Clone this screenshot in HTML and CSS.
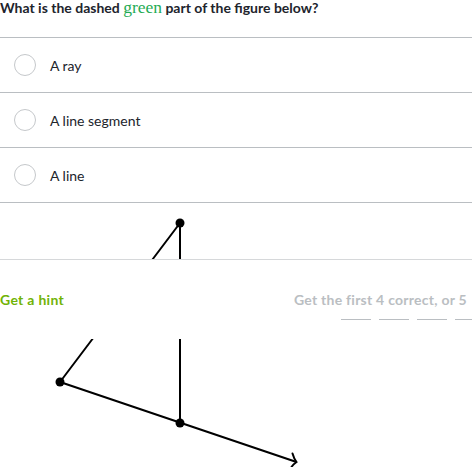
FILE: index.html
```html
<!DOCTYPE html>
<html>
<head>
<meta charset="utf-8">
<link rel="stylesheet" href="styles.css">
</head>
<body>
<div class="page">
  <div class="question">What is the dashed <span class="math">green</span> part of the figure below?</div>
  <ul class="choices">
    <li class="choice"><span class="radio"></span><span class="label">A ray</span></li>
    <li class="choice"><span class="radio"></span><span class="label">A line segment</span></li>
    <li class="choice"><span class="radio"></span><span class="label">A line</span></li>
  </ul>
  <svg class="figure" width="472" height="264" viewBox="0 203 472 264">
    <g stroke="#000" stroke-width="2" fill="none" stroke-linecap="round">
      <line x1="180" y1="223" x2="180" y2="423"/>
      <line x1="180" y1="223" x2="60" y2="382"/>
      <line x1="60" y1="382" x2="295" y2="461.5"/>
      <path d="M292.5 453.5 C293.5 457 295 460 296.5 462 C294.5 463.5 292.5 465 291.5 467"/>
    </g>
    <g fill="#000">
      <circle cx="180" cy="223" r="4.5"/>
      <circle cx="60" cy="382" r="4.5"/>
      <circle cx="180" cy="423" r="4.5"/>
    </g>
  </svg>
  <div class="footer">
    <a class="hint">Get a hint</a>
    <div class="progress">
      <div class="progress-text">Get the first 4 correct, or 5</div>
      <div class="dashes"><span class="dash"></span><span class="dash"></span><span class="dash"></span><span class="dash"></span><span class="dash"></span></div>
    </div>
  </div>
</div>
</body>
</html>
```
FILE: styles.css
```css
html, body {
  margin: 0;
  padding: 0;
  overflow: hidden;
  background: #fff;
}
body {
  font-family: Lato, "Open Sans", sans-serif;
  color: #21242c;
}
.page {
  position: relative;
  width: 472px;
  height: 467px;
  overflow: hidden;
}
.question {
  height: 37px;
  font-size: 14px;
  line-height: 15px;
  font-weight: 700;
  border-bottom: 1px solid #babec2;
}
.math {
  font-family: "Liberation Serif", "DejaVu Serif", serif;
  font-weight: 400;
  font-size: 17.5px;
  line-height: 15px;
  color: #1fab54;
}
.choices {
  list-style: none;
  margin: 0;
  padding: 0;
}
.choice {
  height: 54px;
  display: flex;
  align-items: center;
  border-bottom: 1px solid #babec2;
  font-size: 14px;
}
.radio {
  width: 20px;
  height: 20px;
  margin-left: 14px;
  margin-right: 14px;
  border: 1px solid #c5c8cb;
  border-radius: 50%;
  flex: none;
}
.figure {
  display: block;
}
.footer {
  position: absolute;
  left: 0;
  top: 259px;
  width: 472px;
  height: 79px;
  background: #fff;
  border-top: 1px solid #d6d8da;
  display: flex;
  align-items: flex-start;
}
.hint {
  margin-top: 31px;
  font-size: 14px;
  font-weight: 700;
  letter-spacing: 0.3px;
  color: #71b307;
}
.progress {
  margin-left: auto;
  width: 178px;
  margin-top: 31px;
  white-space: nowrap;
}
.progress-text {
  font-size: 14px;
  font-weight: 700;
  letter-spacing: 0.25px;
  color: #babec2;
}
.dashes {
  display: flex;
  gap: 8px;
  padding-left: 47px;
  margin-top: 11px;
}
.dash {
  width: 30px;
  height: 1px;
  background: #babec2;
  flex: none;
}
```
